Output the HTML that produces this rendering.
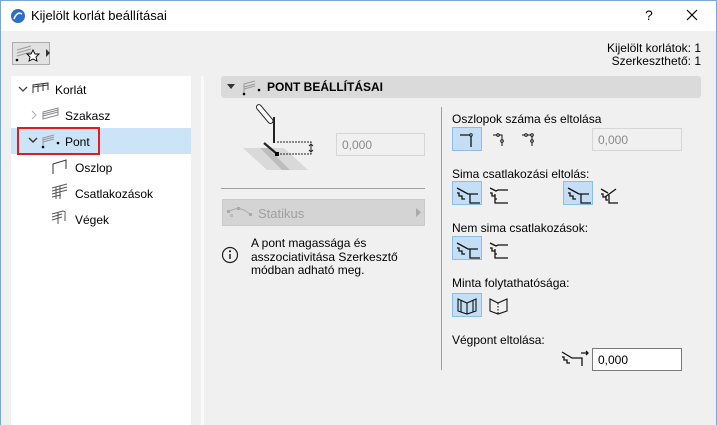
<!DOCTYPE html>
<html><head><meta charset="utf-8"><style>
*{margin:0;padding:0;box-sizing:border-box}
body{width:717px;height:425px;overflow:hidden;background:#f0f0f0;font-family:"Liberation Sans",sans-serif;font-size:12px;color:#000;position:relative}
.a{position:absolute}
.t{position:absolute;white-space:nowrap}
.btn{position:absolute;width:30px;height:24px}
.sel{background:#c4dff5;border:1px solid #8cbde6}
.inp{position:absolute;height:23px;border:1px solid #d6d6d6;background:#f0f0f0;color:#8a8a8a;padding:4px 5px;font-size:12px}
</style></head><body>
<div class="a" style="left:0;top:0;width:717px;height:31px;background:#fff;border-left:1px solid #7aa7d8;border-right:1px solid #7aa7d8;border-top:1px solid #7aa7d8"></div>
<svg class="a" style="left:10px;top:8px" width="16" height="16"><circle cx="8" cy="8" r="7" fill="#2d6ec9"/><path d="M4 11 Q7 3 12 6" stroke="#fff" stroke-width="1.5" fill="none"/></svg>
<div class="t" style="left:31px;top:8px;font-size:13px">Kijelölt korlát beállításai</div>
<div class="t" style="left:645px;top:7px;font-size:14px">?</div>
<svg class="a" style="left:686px;top:9px" width="12" height="12"><path d="M1 1L11 11M11 1L1 11" stroke="#000" stroke-width="1.2"/></svg>
<div class="a" style="left:0;top:31px;width:1px;height:394px;background:#7aa7d8"></div>
<div class="a" style="left:716px;top:31px;width:1px;height:394px;background:#7aa7d8"></div>

<div class="a" style="left:12px;top:42px;width:38px;height:23px;border:1px solid #adadad;background:#e1e1e1"></div>
<svg class="a" style="left:14px;top:44px" width="36" height="20"><path d="M3 6L17 2M3 9L17 5M3 12L17 8" stroke="#999" fill="none"/><circle cx="3" cy="16" r="1.3"/><path d="M32 5L36 9 32 13Z" fill="#333"/><path d="M19 6l2 4 4 0-3 3 1 4-4-2-4 2 1-4-3-3 4 0z" fill="#fff" stroke="#000" stroke-width=".9"/></svg>
<div class="t" style="right:16px;top:42px;text-align:right;line-height:13px">Kijelölt korlátok: 1<br>Szerkeszthető: 1</div>

<div class="a" style="left:11px;top:76px;width:180px;height:349px;background:#fff"></div>
<div class="a" style="left:201px;top:76px;width:3px;height:349px;background:#fafafa"></div>
<svg class="a" style="left:18px;top:86px" width="10" height="7"><path d="M1 1L5 5 9 1" stroke="#444" stroke-width="1.3" fill="none"/></svg>
<svg class="a" style="left:32px;top:82px" width="18" height="12"><path d="M1 11V3L16 1V8M1 5L16 3M6 3V10M11 2V9" stroke="#333" fill="none"/></svg>
<div class="t" style="left:55px;top:83px">Korlát</div>
<svg class="a" style="left:30px;top:110px" width="8" height="10"><path d="M2 1L6 5 2 9" stroke="#aaa" fill="none"/></svg>
<svg class="a" style="left:42px;top:107px" width="18" height="13"><path d="M1 5L16 1V8L1 12ZM1 7L16 3M1 9L16 5" stroke="#888" fill="none"/></svg>
<div class="t" style="left:65px;top:109px">Szakasz</div>
<div class="a" style="left:11px;top:128px;width:180px;height:26px;background:#cce4f7"></div>
<div class="a" style="left:17px;top:127px;width:83px;height:28px;border:2px solid #e21b1b"></div>
<svg class="a" style="left:28px;top:137px" width="10" height="7"><path d="M1 1L5 5 9 1" stroke="#333" stroke-width="1.4" fill="none"/></svg>
<svg class="a" style="left:40px;top:133px" width="20" height="16"><path d="M3 14V5L14 2M3 7L14 4M3 9L14 6" stroke="#999" fill="none"/><circle cx="3" cy="14" r="1.3"/><circle cx="18" cy="10" r="1.3"/></svg>
<div class="t" style="left:65px;top:135px">Pont</div>
<svg class="a" style="left:51px;top:159px" width="18" height="16"><path d="M2 15V5L15 1V10" stroke="#333" fill="none"/></svg>
<div class="t" style="left:75px;top:161px">Oszlop</div>
<svg class="a" style="left:51px;top:183px" width="18" height="17"><path d="M1 5L16 1M1 8L16 4M1 11L16 7M1 14L10 12M5 4V16M9 3V16" stroke="#555" fill="none"/></svg>
<div class="t" style="left:75px;top:187px">Csatlakozások</div>
<svg class="a" style="left:51px;top:209px" width="18" height="16"><path d="M1 5L12 2Q15 2 14 6V12M1 8L11 5M1 11L11 8M7 4V15" stroke="#555" fill="none"/></svg>
<div class="t" style="left:75px;top:213px">Végek</div>

<div class="a" style="left:221px;top:76px;width:480px;height:22px;background:#dadada;border-radius:3px"></div>
<svg class="a" style="left:227px;top:84px" width="8" height="5"><path d="M0 0H8L4 5Z" fill="#333"/></svg>
<svg class="a" style="left:241px;top:78px" width="22" height="18"><path d="M3 16V6L14 3M3 9L14 6M3 11L14 8" stroke="#999" fill="none"/><circle cx="3" cy="16" r="1.3"/><circle cx="18" cy="12" r="1.3"/></svg>
<div class="t" style="left:267px;top:80px;font-weight:bold">PONT BEÁLLÍTÁSAI</div>

<svg class="a" style="left:240px;top:100px" width="80" height="75"><path d="M3 48H44L68 70H27Z" fill="#d9d9d9"/><path d="M20 48H28L50 70H42Z" fill="#bdbdbd"/><rect x="22" y="3" width="5" height="23" rx="2.5" transform="rotate(-40 24 14)" fill="#fff" stroke="#222"/><path d="M34 17V43" stroke="#222" stroke-width="2"/><path d="M24 43L37 54" stroke="#222" stroke-width="2.2"/><rect x="35" y="52" width="4" height="4"/><path d="M37 42H71V54H37" stroke="#222" stroke-dasharray="2 1" fill="none"/><path d="M71 44V52M69 46L71 44 73 46M69 50L71 52 73 50" stroke="#222" fill="none"/></svg>
<div class="inp" style="left:336px;top:133px;width:89px">0,000</div>
<div class="a" style="left:221px;top:188px;width:204px;height:1px;background:#a0a0a0"></div>
<div class="a" style="left:222px;top:199px;width:203px;height:27px;background:#d4d4d4;border:1px solid #cacaca"></div>
<svg class="a" style="left:226px;top:206px" width="28" height="12"><path d="M3 5L12 2 18 4 24 8" stroke="#aaa" fill="none"/><rect x="1" y="4" width="3" height="3" fill="#aaa"/><rect x="11" y="1" width="3" height="3" fill="#aaa"/><rect x="23" y="7" width="3" height="3" fill="#aaa"/><rect x="4" y="8" width="3" height="3" fill="#bbb"/></svg>
<div class="t" style="left:258px;top:206px;font-size:13px;color:#a0a0a0">Statikus</div>
<svg class="a" style="left:416px;top:208px" width="6" height="9"><path d="M0 0L5 4.5 0 9Z" fill="#aaa"/></svg>
<svg class="a" style="left:221px;top:246px" width="18" height="18"><circle cx="9" cy="9" r="7.5" stroke="#222" fill="none" stroke-width="1.2"/><path d="M9 8V13" stroke="#222" stroke-width="1.5"/><circle cx="9" cy="5.3" r="1"/></svg>
<div class="t" style="left:251px;top:237px;line-height:13.5px">A pont magassága és<br>asszociativitása Szerkesztő<br>módban adható meg.</div>

<div class="a" style="left:441px;top:107px;width:1px;height:263px;background:#a0a0a0"></div>
<div class="t" style="left:452px;top:112px">Oszlopok száma és eltolása</div>
<div class="btn sel" style="left:452px;top:127px"></div>
<svg class="a" style="left:452px;top:127px" width="140" height="24"><path d="M8 8H19V20" stroke="#111" stroke-width="1.3" fill="none"/><circle cx="19" cy="8" r="1.2" fill="#fff" stroke="#111"/><path d="M41 8H50V19" stroke="#111" fill="none"/><circle cx="46" cy="8" r="1.3" fill="#fff" stroke="#111"/><circle cx="50" cy="14" r="1.3" fill="#fff" stroke="#111"/><path d="M70 8H80V19" stroke="#111" fill="none"/><circle cx="74" cy="8" r="1.3" fill="#fff" stroke="#111"/><circle cx="80" cy="8" r="1.3" fill="#fff" stroke="#111"/><circle cx="80" cy="14" r="1.3" fill="#fff" stroke="#111"/></svg>
<div class="inp" style="left:592px;top:128px;width:90px">0,000</div>

<div class="t" style="left:452px;top:167px">Sima csatlakozási eltolás:</div>
<div class="btn sel" style="left:452px;top:181px"></div>
<div class="btn sel" style="left:563px;top:181px"></div>
<svg class="a" style="left:452px;top:181px" width="180" height="26"><g stroke="#111" fill="none" stroke-width="1.3"><path d="M5 7L16 13H26M18 13V22H28M5 12L7 12 7 15 10 15 10 18 13 18"/><path d="M38 7L44 10 46 9H56M43 13V22H56M38 12L40 12 40 15 43 15 43 18 45 18"/><path d="M116 7L127 13H137M129 13V22H139M116 12L118 12 118 15 121 15 121 18 124 18"/><path d="M149 8L156 12M153 16L164 8M157 14V22H166M149 13L151 13 151 16 154 16 154 19 156 19"/></g></svg>

<div class="t" style="left:452px;top:221px">Nem sima csatlakozások:</div>
<div class="btn sel" style="left:452px;top:236px"></div>
<svg class="a" style="left:452px;top:236px" width="80" height="26"><g stroke="#111" fill="none" stroke-width="1.3"><path d="M5 7L16 13H26M18 13V22H28M5 12L7 12 7 15 10 15 10 18 13 18"/><path d="M38 7L44 10 46 9H56M43 13V22H56M38 12L40 12 40 15 43 15 43 18 45 18"/></g></svg>

<div class="t" style="left:452px;top:276px">Minta folytathatósága:</div>
<div class="btn sel" style="left:452px;top:293px"></div>
<svg class="a" style="left:452px;top:293px" width="80" height="24"><g stroke="#111" fill="none" stroke-width="1.1"><path d="M6 6L15 10L24 6V18L15 21L6 18ZM15 10V21M9 7V19M21 7V19"/><path d="M38 6L46 10L55 6V18L46 21L38 18Z"/><path d="M46 10V21" stroke-dasharray="1.5 1.5"/></g></svg>

<div class="t" style="left:452px;top:333px">Végpont eltolása:</div>
<svg class="a" style="left:560px;top:348px" width="30" height="20"><g stroke="#111" fill="none" stroke-width="1.3"><path d="M2 4L12 10H22V18M2 9L4 9 4 12 7 12 7 15 10 15"/><path d="M21 5H28M26 3L28 5 26 7"/></g></svg>
<div class="a" style="left:592px;top:348px;width:90px;height:23px;border:1px solid #7a7a7a;background:#fff;padding:4px 5px">0,000</div>
</body></html>
